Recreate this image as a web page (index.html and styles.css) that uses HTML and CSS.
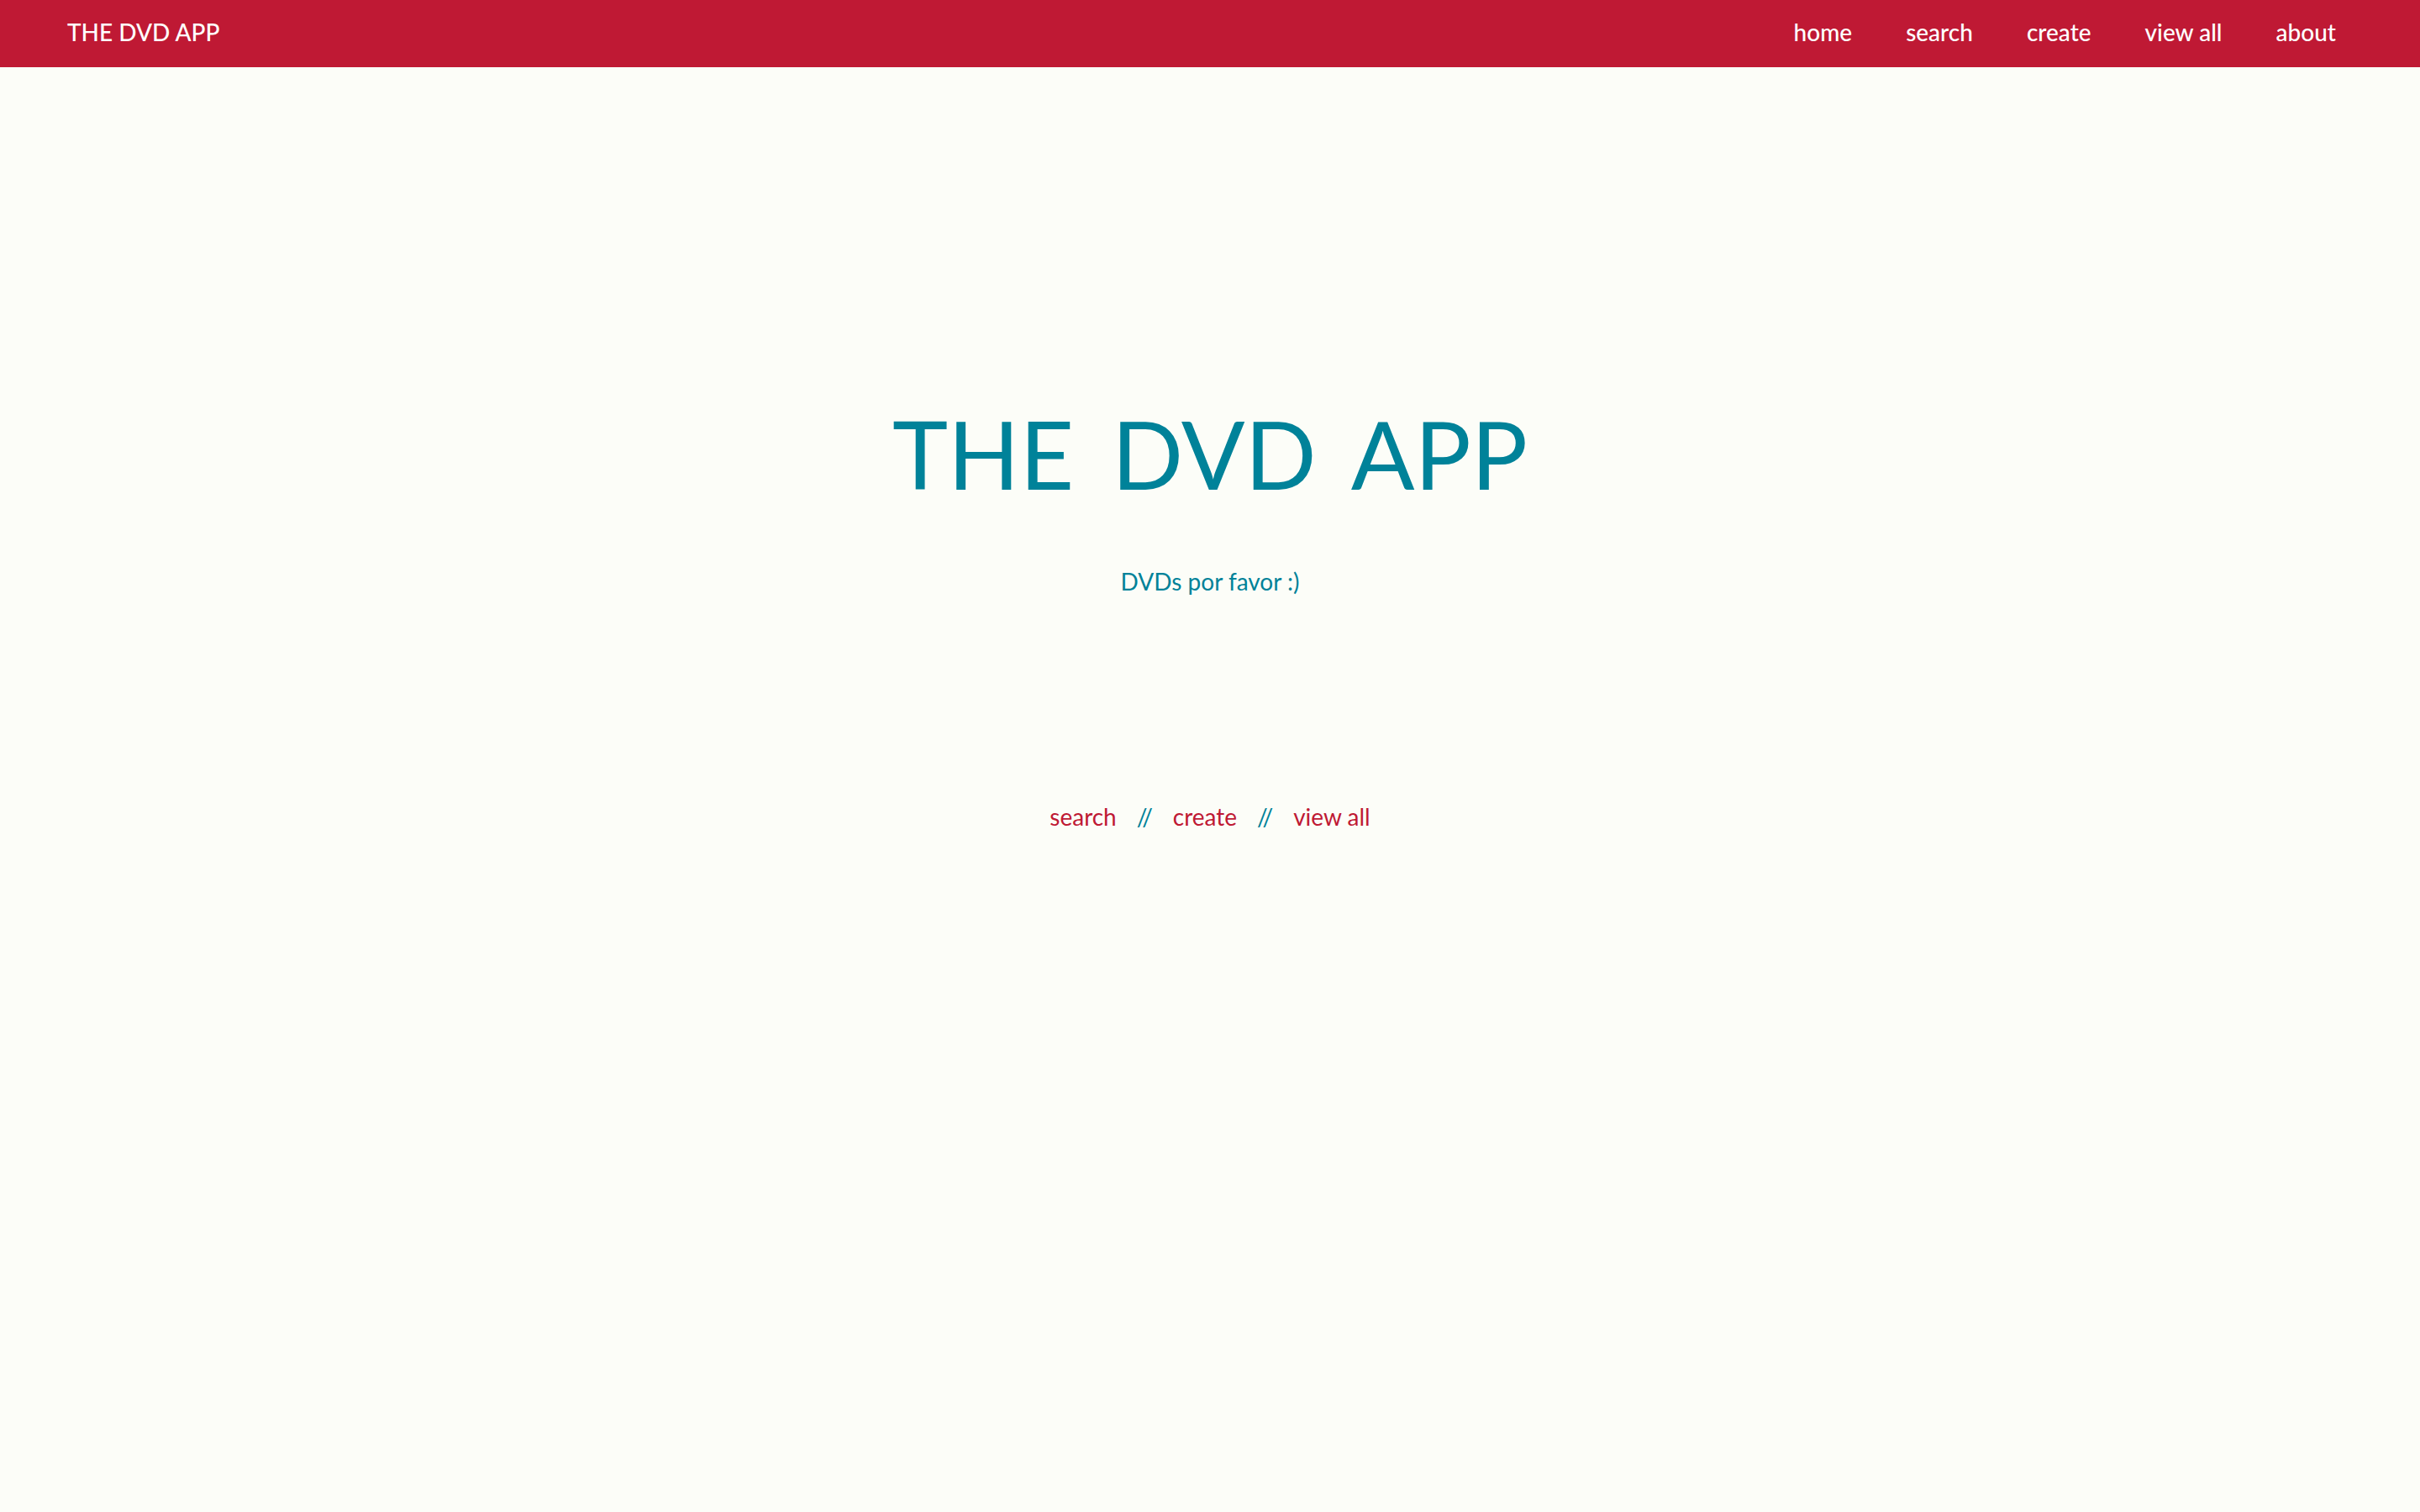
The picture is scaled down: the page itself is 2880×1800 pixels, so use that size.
FILE: index.html
```html
<!DOCTYPE html>
<html lang="en">
<head>
<meta charset="utf-8">
<title>The DVD App</title>
<link rel="stylesheet" href="styles.css">
</head>
<body>
<header class="topbar">
  <a class="brand" href="#">THE DVD APP</a>
  <nav class="menu">
    <a href="#">home</a>
    <a href="#">search</a>
    <a href="#">create</a>
    <a href="#">view all</a>
    <a href="#">about</a>
  </nav>
</header>
<main class="hero">
  <h1 class="title">THE <span class="word">DVD</span> APP</h1>
  <p class="tagline">DVDs por favor :)</p>
  <nav class="actions">
    <a href="#">search</a>
    <span>//</span>
    <a href="#">create</a>
    <span>//</span>
    <a href="#">view all</a>
  </nav>
</main>
</body>
</html>
```
FILE: styles.css
```css
* { box-sizing: border-box; }
body {
  margin: 0;
  min-height: 100vh;
  background: #fcfdf8;
  color: #008299;
  font-family: Lato, sans-serif;
  font-size: 28px;
  line-height: 40px;
}
a { color: #bf1934; text-decoration: none; }
.topbar {
  display: flex;
  justify-content: space-between;
  align-items: center;
  padding: 18px 100px 22px 80px;
  background: #bf1934;
  font-weight: 500;
}
.topbar a { color: #fff; }
.menu { display: flex; gap: 64px; }
.hero {
  display: flex;
  flex-direction: column;
  align-items: center;
  padding-top: 380px;
}
.title {
  margin: 0;
  font-family: Lato, cursive;
  font-size: 112px;
  line-height: 160px;
  font-weight: 400;
}
.word { margin: 0 16px; }
.tagline { margin: 52px 0 240px; }
.actions { display: flex; gap: 24px; }
```
